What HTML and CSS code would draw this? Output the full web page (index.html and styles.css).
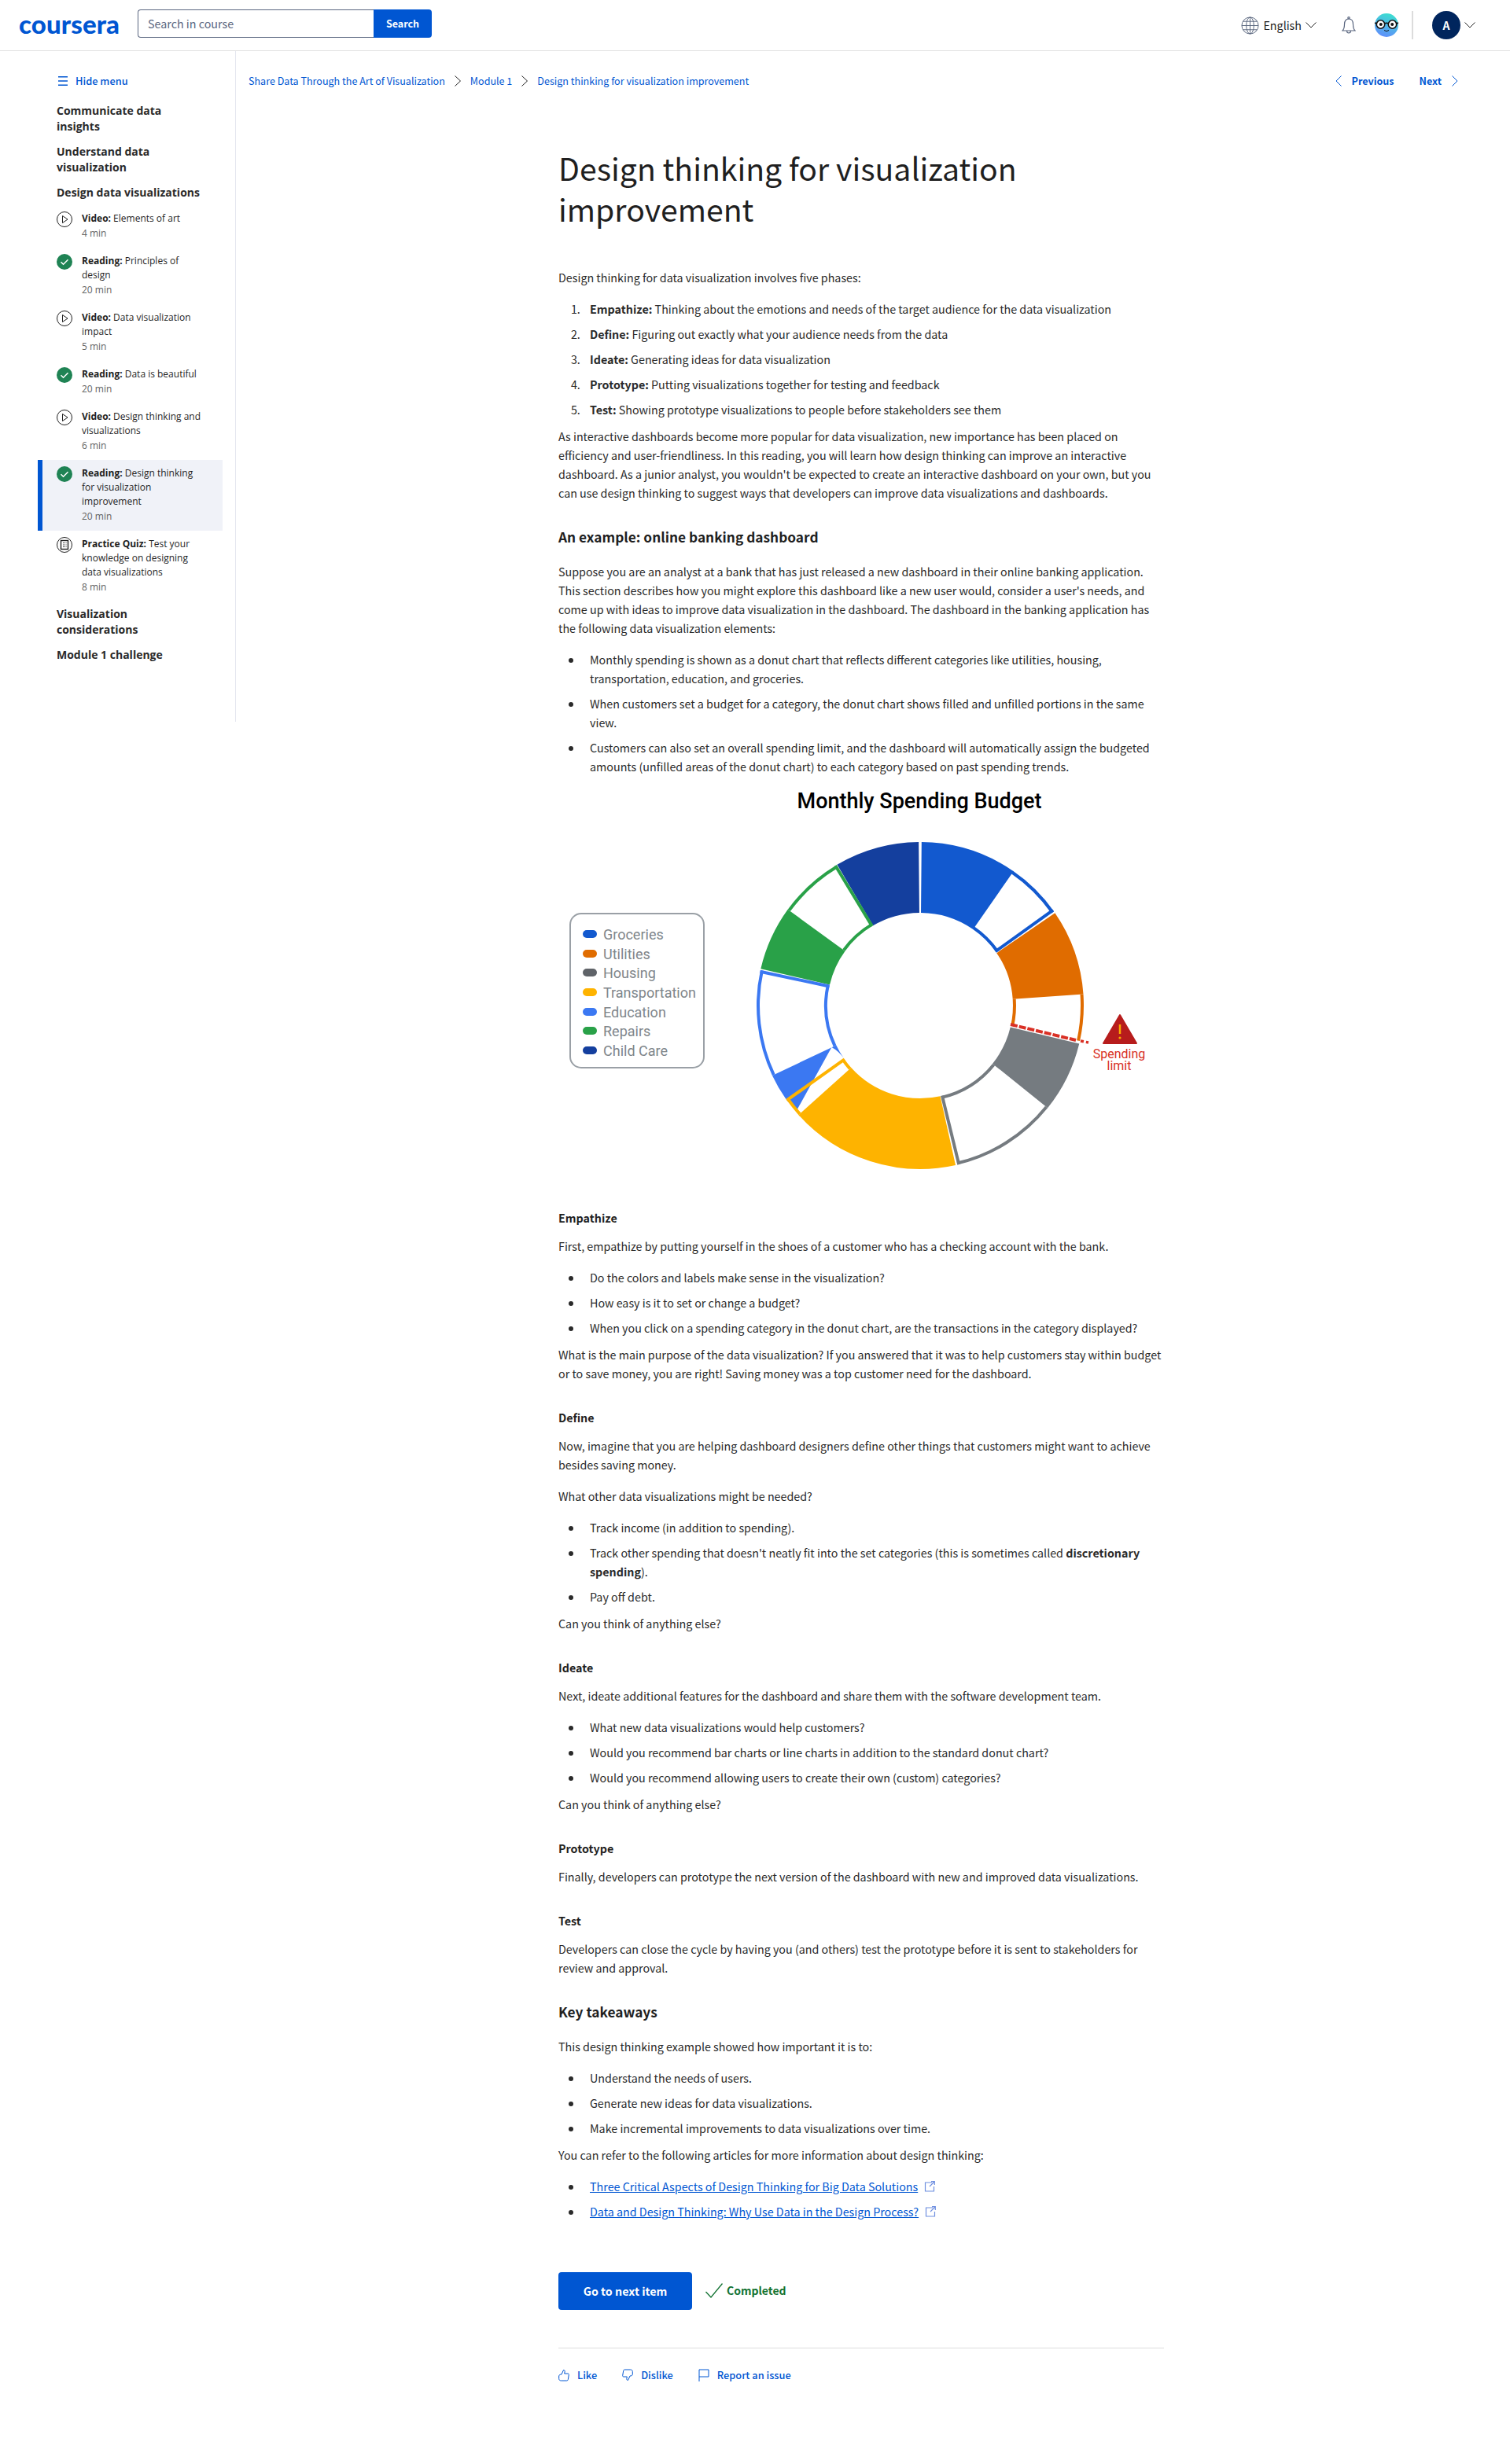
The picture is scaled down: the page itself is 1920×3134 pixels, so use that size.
FILE: index.html
```html
<!DOCTYPE html>
<html lang="en">
<head>
<meta charset="utf-8">
<title>Design thinking for visualization improvement | Coursera</title>
<link rel="stylesheet" href="styles.css">
</head>
<body>
<header class="topbar">
  <a class="logo">coursera</a>
  <form class="search">
    <span class="search-input">Search in course</span>
    <span class="search-btn">Search</span>
  </form>
  <div class="topbar-right">
    <svg class="globe" viewBox="0 0 24 24" fill="none" stroke="#5b6780"><circle cx="12" cy="12" r="11"/><ellipse cx="12" cy="12" rx="5" ry="11"/><path d="M12 1v22M1 12h22M2.6 6.5h18.8M2.6 17.5h18.8"/></svg>
    <span class="lang">English</span>
    <svg class="chev" viewBox="0 0 14 8" fill="none" stroke="#1f1f1f"><path d="M.5.5 7 7 13.500.5"/></svg>
    <svg class="bell" viewBox="0 0 18 22" fill="none" stroke="#5b6780" stroke-width="1.200"><path d="M1 18c2-2 2.500-4 2.500-8S5.500 3 9 3s5.500 3 5.500 7 .5 6 2.500 8Z"/><circle cx="9" cy="1.800" r="1.200"/><path d="M6.500 18c0 4 5 4 5 0"/></svg>
    <svg class="robot" viewBox="0 0 32 30">
      <defs><linearGradient id="rg" x1="0.700" y1="0" x2="0.400" y2="1"><stop offset="0" stop-color="#3be0cf"/><stop offset="1" stop-color="#5f8ffb"/></linearGradient></defs>
      <circle cx="16" cy="15" r="15" fill="url(#rg)"/>
      <circle cx="8.500" cy="14" r="5.200" fill="#fff" stroke="#111" stroke-width="1.600"/>
      <circle cx="23.500" cy="14" r="5.200" fill="#fff" stroke="#111" stroke-width="1.600"/>
      <path d="M13.500 13q2.500-1.500 5 0M1 12l2.500 1M31 12l-2.500 1" stroke="#111" stroke-width="1.400" fill="none"/>
      <circle cx="8.800" cy="14" r="2" fill="#111"/><circle cx="23.200" cy="14" r="2" fill="#111"/>
      <path d="M13 21.500q3 2.500 6 0" stroke="#111" fill="none"/>
    </svg>
    <span class="vsep"></span>
    <span class="avatar">A</span>
    <svg class="chev" viewBox="0 0 14 8" fill="none" stroke="#1f1f1f"><path d="M.5.5 7 7 13.500.5"/></svg>
  </div>
</header>

<div class="layout">
  <aside class="sidebar">
    <div class="hide-menu">
      <svg class="burger" viewBox="0 0 12 12" fill="#0056d2"><path d="M0 0h12v1.600H0zM0 5.200h12v1.600H0zM0 10.400h12V12H0z"/></svg>
      <span>Hide menu</span>
    </div>
    <nav class="nav">
      <div class="nav-section">Communicate data insights</div>
      <div class="nav-section">Understand data visualization</div>
      <div class="nav-section">Design data visualizations</div>

      <div class="nav-item">
        <svg class="nav-icon" viewBox="0 0 20 20" fill="none" stroke="#1f1f1f"><circle cx="10" cy="10" r="9.500"/><path d="M7.500 5.500 14 10l-6.500 4.500Z"/></svg>
        <div><div class="nav-name"><b>Video:</b> Elements of art</div><div class="nav-time">4 min</div></div>
      </div>
      <div class="nav-item">
        <svg class="nav-icon" viewBox="0 0 20 20"><circle cx="10" cy="10" r="10" fill="#1f8354"/><path d="m5.500 10.300 3 3 6-6" fill="none" stroke="#fff" stroke-width="1.500"/></svg>
        <div><div class="nav-name"><b>Reading:</b> Principles of design</div><div class="nav-time">20 min</div></div>
      </div>
      <div class="nav-item">
        <svg class="nav-icon" viewBox="0 0 20 20" fill="none" stroke="#1f1f1f"><circle cx="10" cy="10" r="9.500"/><path d="M7.500 5.500 14 10l-6.500 4.500Z"/></svg>
        <div><div class="nav-name"><b>Video:</b> Data visualization impact</div><div class="nav-time">5 min</div></div>
      </div>
      <div class="nav-item">
        <svg class="nav-icon" viewBox="0 0 20 20"><circle cx="10" cy="10" r="10" fill="#1f8354"/><path d="m5.500 10.300 3 3 6-6" fill="none" stroke="#fff" stroke-width="1.500"/></svg>
        <div><div class="nav-name"><b>Reading:</b> Data is beautiful</div><div class="nav-time">20 min</div></div>
      </div>
      <div class="nav-item">
        <svg class="nav-icon" viewBox="0 0 20 20" fill="none" stroke="#1f1f1f"><circle cx="10" cy="10" r="9.500"/><path d="M7.500 5.500 14 10l-6.500 4.500Z"/></svg>
        <div><div class="nav-name"><b>Video:</b> Design thinking and visualizations</div><div class="nav-time">6 min</div></div>
      </div>
      <div class="nav-item is-active">
        <svg class="nav-icon" viewBox="0 0 20 20"><circle cx="10" cy="10" r="10" fill="#1f8354"/><path d="m5.500 10.300 3 3 6-6" fill="none" stroke="#fff" stroke-width="1.500"/></svg>
        <div><div class="nav-name"><b>Reading:</b> Design thinking for visualization improvement</div><div class="nav-time">20 min</div></div>
      </div>
      <div class="nav-item">
        <svg class="nav-icon" viewBox="0 0 20 20" fill="none" stroke="#1f1f1f"><circle cx="10" cy="10" r="9.500"/><rect x="5.500" y="4.500" width="9" height="11" stroke-width="1.400"/><path d="M8 7.500h4.500M8 10h4.500M8 12.500h4.500" stroke-width="1.200" stroke-dasharray="1.200 .8"/></svg>
        <div><div class="nav-name"><b>Practice Quiz:</b> Test your knowledge on designing data visualizations</div><div class="nav-time">8 min</div></div>
      </div>

      <div class="nav-section">Visualization considerations</div>
      <div class="nav-section">Module 1 challenge</div>
    </nav>
  </aside>

  <main class="main">
    <div class="crumbbar">
      <div class="crumbs">
        <a>Share Data Through the Art of Visualization</a>
        <svg class="crumb-chev" viewBox="0 0 8 14" fill="none" stroke="#1f1f1f"><path d="m.5.500 7 6.500-7 6.500"/></svg>
        <a>Module 1</a>
        <svg class="crumb-chev" viewBox="0 0 8 14" fill="none" stroke="#1f1f1f"><path d="m.5.500 7 6.500-7 6.500"/></svg>
        <a>Design thinking for visualization improvement</a>
      </div>
      <div class="pager">
        <a class="pager-prev"><svg class="pager-chev" viewBox="0 0 8 14" fill="none" stroke="#0056d2"><path d="M7.500.5 1 7l6.500 6.500"/></svg>Previous</a>
        <a class="pager-next">Next<svg class="pager-chev" viewBox="0 0 8 14" fill="none" stroke="#0056d2"><path d="m.5.500 6.500 6.500-6.500 6.500"/></svg></a>
      </div>
    </div>

    <article class="article">
      <h1 class="title">Design thinking for visualization improvement</h1>

      <p>Design thinking for data visualization involves five phases:</p>
      <ol>
        <li><b>Empathize:</b> Thinking about the emotions and needs of the target audience for the data visualization</li>
        <li><b>Define:</b> Figuring out exactly what your audience needs from the data</li>
        <li><b>Ideate:</b> Generating ideas for data visualization</li>
        <li><b>Prototype:</b> Putting visualizations together for testing and feedback</li>
        <li><b>Test:</b> Showing prototype visualizations to people before stakeholders see them</li>
      </ol>
      <p>As interactive dashboards become more popular for data visualization, new importance has been placed on efficiency and user-friendliness. In this reading, you will learn how design thinking can improve an interactive dashboard. As a junior analyst, you wouldn't be expected to create an interactive dashboard on your own, but you can use design thinking to suggest ways that developers can improve data visualizations and dashboards.</p>

      <h2>An example: online banking dashboard</h2>
      <p>Suppose you are an analyst at a bank that has just released a new dashboard in their online banking application. This section describes how you might explore this dashboard like a new user would, consider a user's needs, and come up with ideas to improve data visualization in the dashboard. The dashboard in the banking application has the following data visualization elements:</p>
      <ul>
        <li>Monthly spending is shown as a donut chart that reflects different categories like utilities, housing, transportation, education, and groceries.</li>
        <li>When customers set a budget for a category, the donut chart shows filled and unfilled portions in the same view.</li>
        <li>Customers can also set an overall spending limit, and the dashboard will automatically assign the budgeted amounts (unfilled areas of the donut chart) to each category based on past spending trends.</li>
      </ul>

      <svg class="chart" viewBox="0 0 768 505" role="img" aria-label="Monthly Spending Budget donut chart">
        <text class="chart-title" x="459" y="28" text-anchor="middle">Monthly Spending Budget</text>
        <rect x="15" y="162" width="170" height="196" rx="14" fill="#fff" stroke="#9aa0a6" stroke-width="2"/>
        <g class="legend">
          <rect x="31" y="183" width="18" height="10" rx="5" fill="#1259cf"/><text x="57" y="195">Groceries</text>
          <rect x="31" y="208" width="18" height="10" rx="5" fill="#e06c00"/><text x="57" y="220">Utilities</text>
          <rect x="31" y="232" width="18" height="10" rx="5" fill="#5f6368"/><text x="57" y="244">Housing</text>
          <rect x="31" y="257" width="18" height="10" rx="5" fill="#feb300"/><text x="57" y="269">Transportation</text>
          <rect x="31" y="282" width="18" height="10" rx="5" fill="#3b78f2"/><text x="57" y="294">Education</text>
          <rect x="31" y="306" width="18" height="10" rx="5" fill="#29a148"/><text x="57" y="318">Repairs</text>
          <rect x="31" y="331" width="18" height="10" rx="5" fill="#143f9e"/><text x="57" y="343">Child Care</text>
        </g>
        <g transform="translate(460 279)" fill="none">
          <!-- filled wedges -->
          <g stroke-width="90">
            <circle r="163" pathLength="360" stroke="#1259cf" stroke-dasharray="34.300 325.700" transform="rotate(-89.500)"/>
            <circle r="163" pathLength="360" stroke="#e06c00" stroke-dasharray="30.500 329.500" transform="rotate(-34.500)"/>
            <circle r="163" pathLength="360" stroke="#757b80" stroke-dasharray="25.300 334.700" transform="rotate(13.500)"/>
            <circle r="163" pathLength="360" stroke="#feb300" stroke-dasharray="60.500 299.500" transform="rotate(77.500)"/>
            <circle r="163" pathLength="360" stroke="#3b78f2" stroke-dasharray="9.200 350.800" transform="rotate(145.500)"/>
            <circle r="163" pathLength="360" stroke="#29a148" stroke-dasharray="23 337" transform="rotate(193)"/>
            <circle r="163" pathLength="360" stroke="#143f9e" stroke-dasharray="30 330" transform="rotate(239.500)"/>
          </g>
          <!-- unfilled budget outlines -->
          <g stroke-width="4">
            <g stroke="#1259cf">
              <circle r="206" pathLength="360" stroke-dasharray="20.400 339.600" transform="rotate(-55.500)"/>
              <circle r="120" pathLength="360" stroke-dasharray="20.400 339.600" transform="rotate(-55.500)"/>
              <path d="M0-118V-208" transform="rotate(54.300)"/>
            </g>
            <g stroke="#e06c00">
              <circle r="206" pathLength="360" stroke-dasharray="16.500 343.500" transform="rotate(-4)"/>
              <circle r="120" pathLength="360" stroke-dasharray="16.500 343.500" transform="rotate(-4)"/>
            </g>
            <g stroke="#757b80">
              <circle r="206" pathLength="360" stroke-dasharray="38 322" transform="rotate(38.800)"/>
              <circle r="120" pathLength="360" stroke-dasharray="38 322" transform="rotate(38.800)"/>
              <path d="M0-118V-208" transform="rotate(166.300)"/>
            </g>
            <g stroke="#feb300">
              <circle r="206" pathLength="360" stroke-dasharray="7 353" transform="rotate(138)"/>
              <circle r="120" pathLength="360" stroke-dasharray="7 353" transform="rotate(138)"/>
              <path d="M0-118V-208" transform="rotate(234.600)"/>
            </g>
            <g stroke="#3b78f2">
              <circle r="206" pathLength="360" stroke-dasharray="37.800 322.200" transform="rotate(154.700)"/>
              <circle r="120" pathLength="360" stroke-dasharray="37.800 322.200" transform="rotate(154.700)"/>
              <path d="M0-118V-208" transform="rotate(282)"/>
            </g>
            <g stroke="#29a148">
              <circle r="206" pathLength="360" stroke-dasharray="23 337" transform="rotate(216)"/>
              <circle r="120" pathLength="360" stroke-dasharray="23 337" transform="rotate(216)"/>
              <path d="M0-118V-208" transform="rotate(328.800)"/>
            </g>
          </g>
          <path d="M115 24 L198 44" stroke="#d93025" stroke-width="4" stroke-dasharray="9 2"/>
          <path d="M204 45 L214 47" stroke="#d93025" stroke-width="3.500" stroke-dasharray="4 3"/>
        </g>
        <path d="M714 291 L735 327 H693 Z" fill="#b71c1c" stroke="#b71c1c" stroke-width="2" stroke-linejoin="round"/>
        <path d="M714 303v12" stroke="#f9ab00" stroke-width="2.500"/>
        <circle cx="714" cy="320" r="1.600" fill="#f9ab00"/>
        <g class="limit">
          <text x="713" y="346" text-anchor="middle">Spending</text>
          <text x="713" y="361" text-anchor="middle">limit</text>
        </g>
      </svg>

      <h3>Empathize</h3>
      <p>First, empathize by putting yourself in the shoes of a customer who has a checking account with the bank.</p>
      <ul>
        <li>Do the colors and labels make sense in the visualization?</li>
        <li>How easy is it to set or change a budget?</li>
        <li>When you click on a spending category in the donut chart, are the transactions in the category displayed?</li>
      </ul>
      <p>What is the main purpose of the data visualization? If you answered that it was to help customers stay within budget or to save money, you are right! Saving money was a top customer need for the dashboard.</p>

      <h3>Define</h3>
      <p>Now, imagine that you are helping dashboard designers define other things that customers might want to achieve besides saving money.</p>
      <p>What other data visualizations might be needed?</p>
      <ul>
        <li>Track income (in addition to spending).</li>
        <li>Track other spending that doesn't neatly fit into the set categories (this is sometimes called <b>discretionary spending</b>).</li>
        <li>Pay off debt.</li>
      </ul>
      <p>Can you think of anything else?</p>

      <h3>Ideate</h3>
      <p>Next, ideate additional features for the dashboard and share them with the software development team.</p>
      <ul>
        <li>What new data visualizations would help customers?</li>
        <li>Would you recommend bar charts or line charts in addition to the standard donut chart?</li>
        <li>Would you recommend allowing users to create their own (custom) categories?</li>
      </ul>
      <p>Can you think of anything else?</p>

      <h3>Prototype</h3>
      <p>Finally, developers can prototype the next version of the dashboard with new and improved data visualizations.</p>

      <h3>Test</h3>
      <p>Developers can close the cycle by having you (and others) test the prototype before it is sent to stakeholders for review and approval.</p>

      <h2>Key takeaways</h2>
      <p>This design thinking example showed how important it is to:</p>
      <ul>
        <li>Understand the needs of users.</li>
        <li>Generate new ideas for data visualizations.</li>
        <li>Make incremental improvements to data visualizations over time.</li>
      </ul>
      <p>You can refer to the following articles for more information about design thinking:</p>
      <ul class="links">
        <li><a>Three Critical Aspects of Design Thinking for Big Data Solutions</a><svg class="ext" viewBox="0 0 14 14" fill="none" stroke="#6f8fe0" stroke-width="1.200"><path d="M10 2H1.500v11h11V7M7 7l6-6M9 .7h4.300V5"/></svg></li>
        <li><a>Data and Design Thinking: Why Use Data in the Design Process?</a><svg class="ext" viewBox="0 0 14 14" fill="none" stroke="#6f8fe0" stroke-width="1.200"><path d="M10 2H1.500v11h11V7M7 7l6-6M9 .7h4.300V5"/></svg></li>
      </ul>

      <div class="complete-row">
        <a class="next-btn">Go to next item</a>
        <svg class="done-check" viewBox="0 0 22 19" fill="none" stroke="#137333" stroke-width="1.300"><path d="M.5 11 7 18 21.500.5"/></svg>
        <span class="done-text">Completed</span>
      </div>

      <div class="feedback">
        <a><svg class="fb-icon" viewBox="0 0 14 16" fill="none" stroke="#0056d2"><path d="M4 7 6.500 1.500c1.200 0 1.700.8 1.700 1.800L7.700 6H12c1 0 1.500.7 1.300 1.600l-1 6c-.2.800-.7 1.400-1.600 1.400H3.500C1.800 15 .7 14 .7 12.500V9C.7 8 2 7 4 7Z"/></svg>Like</a>
        <a><svg class="fb-icon" viewBox="0 0 14 16" fill="none" stroke="#0056d2"><path d="M10 9 7.500 14.500c-1.200 0-1.700-.8-1.700-1.800l.5-2.700H2c-1 0-1.500-.7-1.300-1.600l1-6C1.900 1.600 2.400 1 3.300 1h7.200c1.700 0 2.800 1 2.800 2.500V7c0 1-1.300 2-3.300 2Z"/></svg>Dislike</a>
        <a><svg class="fb-icon" viewBox="0 0 14 16" fill="none" stroke="#0056d2"><path d="M1 16V1h12v9H1"/></svg>Report an issue</a>
      </div>
    </article>
  </main>
</div>
</body>
</html>
```

FILE: styles.css
```css
* { box-sizing: border-box; }
html, body { margin: 0; padding: 0; }
body {
  background: #fff;
  color: #1f1f1f;
  font-family: "Noto Sans CJK SC", "Open Sans", sans-serif;
  font-size: 14.3px;
  line-height: 24px;
  height: 3134px;
  overflow: hidden;
}
a { color: #0056d2; text-decoration: none; }

/* top bar */
.topbar {
  display: flex;
  align-items: center;
  height: 65px;
  padding: 0 44px 0 24px;
  border-bottom: 1px solid #e1e1e1;
}
.logo {
  width: 151px;
  margin-bottom: 4px;
  font-family: "Lato", sans-serif;
  font-weight: 900;
  font-size: 33px;
  line-height: 36px;
  letter-spacing: .1px;
  color: #0056d2;
}
.search { display: flex; height: 36px; width: 374px; margin-bottom: 4px; }
.search-input {
  flex: 1;
  padding-left: 12px;
  border: 1px solid #5b6780;
  border-right: 0;
  border-radius: 4px 0 0 4px;
  color: #5b6780;
  line-height: 34px;
}
.search-btn {
  width: 74px;
  background: #0056d2;
  border-radius: 0 4px 4px 0;
  color: #fff;
  font-size: 12.5px;
  font-weight: 600;
  line-height: 36px;
  text-align: center;
}
.topbar-right { display: flex; align-items: center; margin-left: auto; }
.globe { width: 23px; height: 23px; }
.lang { margin-left: 5px; }
.chev { width: 14px; height: 8px; margin-left: 5px; }
.bell { width: 18px; height: 22px; margin-left: 32px; }
.robot { width: 32px; height: 30px; margin-left: 23px; }
.vsep { width: 2px; height: 36px; margin-left: 16px; background: #dcdcdc; }
.avatar {
  width: 36px;
  height: 36px;
  margin-left: 24px;
  border-radius: 50%;
  background: #00255d;
  color: #fff;
  font-size: 14px;
  font-weight: 700;
  line-height: 36px;
  text-align: center;
}

.layout { display: flex; }

/* sidebar */
.sidebar {
  flex: none;
  width: 300px;
  height: 853px;
  border-right: 1px solid #e5e7ef;
}
.hide-menu {
  display: flex;
  align-items: center;
  gap: 10px;
  height: 20px;
  margin: 28px 0 0 74px;
  color: #0056d2;
  font-size: 12.8px;
  font-weight: 500;
}
.burger { width: 12px; height: 12px; }
.nav {
  width: 235px;
  margin: 12px 0 0 48px;
  font-family: "Open Sans", sans-serif;
}
.nav-section {
  padding: 6px 24px;
  font-size: 14px;
  font-weight: 700;
  line-height: 20px;
  color: #2a2a2a;
}
.nav-item {
  display: flex;
  gap: 12px;
  padding: 8px 20px 8px 18px;
  border-left: 6px solid transparent;
  font-size: 12px;
  line-height: 18px;
}
.nav-item b { font-weight: 700; }
.nav-item.is-active { border-left-color: #0056d2; background: #f0f2f8; }
.nav-icon { flex: none; width: 20px; height: 20px; }
.nav-time { color: #636363; line-height: 20px; }

/* main column */
.main { flex: 1; min-width: 0; }
.crumbbar {
  display: flex;
  justify-content: space-between;
  align-items: center;
  height: 20px;
  margin-top: 28px;
  padding: 0 66px 0 16px;
  font-size: 12.55px;
}
.crumbs { display: flex; align-items: center; gap: 12px; }
.crumb-chev { width: 8px; height: 14px; }
.pager { display: flex; gap: 32px; font-weight: 600; }
.pager a { display: flex; align-items: center; gap: 13px; }
.pager-chev { width: 8px; height: 14px; }

.article { width: 770px; margin: 0 0 0 410px; }
.title {
  margin: 74px 0 50px;
  font-size: 39.2px;
  font-weight: 400;
  line-height: 52px;
}
p, li { color: #2a2a2a; }
p { margin: 0 0 16px; }
ol, ul { margin: 0 0 10px; padding-left: 31px; }
li { margin-bottom: 8px; padding-left: 9px; }
h2 { margin: 32px 0 20px; font-size: 17.3px; font-weight: 600; line-height: 24px; }
h3 { margin: 32px 0 12px; font-size: 14.3px; font-weight: 700; line-height: 24px; }
.chart { display: block; width: 768px; height: 505px; margin-top: 13px; }
.chart-title { font-family: Roboto, sans-serif; font-size: 27px; font-weight: 500; fill: #000; }
.legend text { font-family: Roboto, sans-serif; font-size: 18px; fill: #80868b; }
.limit text { font-family: Roboto, sans-serif; font-size: 16px; fill: #d93025; }

.links a { color: #0056d2; text-decoration: underline; }
.ext { width: 14px; height: 14px; margin-left: 8px; vertical-align: -1px; }

.complete-row { display: flex; align-items: flex-start; margin-top: 65px; }
.next-btn {
  width: 170px;
  height: 48px;
  background: #0056d2;
  border-radius: 4px;
  color: #fff;
  font-weight: 600;
  line-height: 48px;
  text-align: center;
}
.done-check { width: 22px; height: 19px; margin: 14px 0 0 17px; }
.done-text { margin: 11px 0 0 5px; color: #137333; font-size: 14px; font-weight: 600; }

.feedback {
  display: flex;
  gap: 32px;
  margin-top: 48px;
  padding-top: 22px;
  border-top: 1px solid #dcdcdc;
  font-size: 12.8px;
  font-weight: 500;
}
.feedback a { display: flex; align-items: center; gap: 10px; }
.fb-icon { width: 14px; height: 16px; }
```
